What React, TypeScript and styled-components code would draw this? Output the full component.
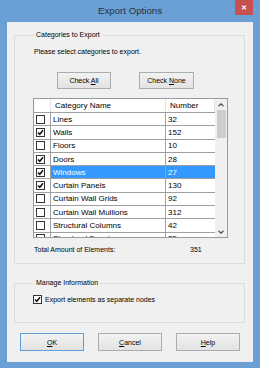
import React from "react";
import styled, { createGlobalStyle } from "styled-components";

const GlobalStyle = createGlobalStyle`
  html, body {
    margin: 0;
    padding: 0;
    background: #6ba0d6;
  }
  body {
    font-family: "Liberation Sans", Arial, sans-serif;
  }
`;

interface ICategory {
  id: number;
  name: string;
  count: number;
  checked: boolean;
}

const categories: ICategory[] = [
  { id: 1, name: "Lines", count: 32, checked: false },
  { id: 2, name: "Walls", count: 152, checked: true },
  { id: 3, name: "Floors", count: 10, checked: false },
  { id: 4, name: "Doors", count: 28, checked: true },
  { id: 5, name: "Windows", count: 27, checked: true },
  { id: 6, name: "Curtain Panels", count: 130, checked: true },
  { id: 7, name: "Curtain Wall Grids", count: 92, checked: false },
  { id: 8, name: "Curtain Wall Mullions", count: 312, checked: false },
  { id: 9, name: "Structural Columns", count: 42, checked: false },
  { id: 10, name: "Structural Framing", count: 25, checked: false },
];

const selectedId = 5;

const CheckBox: React.FC<{ checked: boolean }> = ({ checked }) => (
  <Box>
    {checked && (
      <svg width="7" height="7" viewBox="0 0 7 7">
        <path d="M1 3.4 L2.8 5.3 L6 1.2" fill="none" stroke="#111" strokeWidth="1.5" />
      </svg>
    )}
  </Box>
);

const Chevron: React.FC<{ down?: boolean }> = ({ down }) => (
  <svg width="6" height="4" viewBox="0 0 6 4">
    <path
      d={down ? "M0.5 0.8 L3 3.2 L5.5 0.8" : "M0.5 3.2 L3 0.8 L5.5 3.2"}
      fill="none"
      stroke="#505050"
      strokeWidth="1.2"
    />
  </svg>
);

const App: React.FC = () => {
  return (
    <>
      <GlobalStyle />
      <Window>
        <TitleBar>
          <Title>Export Options</Title>
          <CloseButton>✕</CloseButton>
        </TitleBar>
        <Client>
          <GroupBox>
            <Legend>Categories to Export</Legend>
            <Prompt>Please select categories to export.</Prompt>
            <CheckButtons>
              <Button $width={54}>
                <span>
                  Check <u>A</u>ll
                </span>
              </Button>
              <Button $width={55}>
                <span>
                  Check <u>N</u>one
                </span>
              </Button>
            </CheckButtons>
            <Grid>
              <Table>
                <HeaderRow>
                  <HeadCell $width={17} />
                  <HeadCell $width={115}>Category Name</HeadCell>
                  <HeadCell>Number</HeadCell>
                </HeaderRow>
                {categories.map((c) => {
                  const sel = c.id === selectedId;
                  return (
                    <Row key={c.id}>
                      <CheckCell>
                        <CheckBox checked={c.checked} />
                      </CheckCell>
                      <NameCell $selected={sel}>{c.name}</NameCell>
                      <NumberCell $selected={sel}>{c.count}</NumberCell>
                    </Row>
                  );
                })}
              </Table>
              <ScrollBar>
                <ArrowButton>
                  <Chevron />
                </ArrowButton>
                <Track>
                  <Thumb />
                </Track>
                <ArrowButton>
                  <Chevron down />
                </ArrowButton>
              </ScrollBar>
            </Grid>
            <TotalRow>
              <TotalLabel>Total Amount of Elements:</TotalLabel>
              <span>351</span>
            </TotalRow>
          </GroupBox>
          <GroupBox $second>
            <Legend>Manage Information</Legend>
            <OptionRow>
              <CheckBox checked />
              <span>Export elements as separate nodes</span>
            </OptionRow>
          </GroupBox>
          <DialogButtons>
            <Button $width={64} $height={18} $default>
              <span>
                <u>O</u>K
              </span>
            </Button>
            <Button $width={64} $height={18}>
              <span>
                <u>C</u>ancel
              </span>
            </Button>
            <Button $width={64} $height={18}>
              <span>
                <u>H</u>elp
              </span>
            </Button>
          </DialogButtons>
        </Client>
      </Window>
    </>
  );
};

const Window = styled.div`
  width: 260px;
  height: 368px;
  box-sizing: border-box;
  padding: 0 7px 6px;
  background: #6ba0d6;
  display: flex;
  flex-direction: column;
`;

const TitleBar = styled.div`
  height: 22px;
  display: grid;
  grid-template-columns: 1fr auto 1fr;
  align-items: start;
`;

const Title = styled.div`
  grid-column: 2;
  line-height: 22px;
  font-size: 9.7px;
  color: #22303f;
`;

const CloseButton = styled.div`
  grid-column: 3;
  justify-self: end;
  width: 18px;
  height: 15px;
  background: #c75050;
  color: #fff;
  font-size: 7px;
  font-weight: bold;
  display: flex;
  align-items: center;
  justify-content: center;
`;

const Client = styled.div`
  flex: 1;
  background: #f0f0f0;
  padding: 9px 8px 11px 7px;
  display: flex;
  flex-direction: column;
  font-size: 7px;
  color: #000;
`;

const GroupBox = styled.fieldset<{ $second?: boolean }>`
  margin: ${(p) => (p.$second ? "15px 0 0" : "0")};
  padding: ${(p) => (p.$second ? "0 0 18px 18px" : "0 0 9px 18px")};
  border: 1px solid #dcdcdc;
  min-inline-size: 0;
  display: flex;
  flex-direction: column;
`;

const Legend = styled.legend`
  margin-left: 1px;
  padding: 0 2px;
  font-size: 7px;
  line-height: 8px;
`;

const Prompt = styled.div`
  margin-top: 8px;
  padding-left: 1px;
  line-height: 9px;
`;

const CheckButtons = styled.div`
  margin: 16px 0 0 24px;
  display: flex;
  gap: 28px;
`;

const Button = styled.div<{ $width: number; $height?: number; $default?: boolean }>`
  width: ${(p) => p.$width}px;
  height: ${(p) => p.$height ?? 17}px;
  box-sizing: border-box;
  border: 1px solid ${(p) => (p.$default ? "#5e9fdc" : "#adadad")};
  background: linear-gradient(#f2f2f2, #e3e3e3);
  display: flex;
  align-items: center;
  justify-content: center;
  font-size: 7px;
  color: #000;
  white-space: pre;
`;

const Grid = styled.div`
  margin-top: 9px;
  width: 195px;
  height: 140px;
  box-sizing: border-box;
  border: 1px solid #9a9a9a;
  background: #fff;
  display: flex;
`;

const Table = styled.div`
  flex: 1;
  overflow: hidden;
  display: flex;
  flex-direction: column;
  font-size: 8px;
`;

const HeaderRow = styled.div`
  height: 14px;
  flex: none;
  box-sizing: border-box;
  border-bottom: 1px solid #a0a0a0;
  display: flex;
`;

const HeadCell = styled.div<{ $width?: number }>`
  ${(p) => (p.$width ? `width: ${p.$width}px;` : "flex: 1;")}
  flex-shrink: 0;
  box-sizing: border-box;
  border-right: 1px solid #e3e3e3;
  padding-left: 4px;
  display: flex;
  align-items: center;
`;

const Row = styled.div`
  height: 13.3px;
  flex: none;
  box-sizing: border-box;
  border-bottom: 1px solid #a0a0a0;
  display: flex;
`;

const CheckCell = styled.div`
  width: 17px;
  box-sizing: border-box;
  border-right: 1px solid #a0a0a0;
  display: flex;
  align-items: center;
  padding-left: 2px;
`;

const NameCell = styled.div<{ $selected: boolean }>`
  width: 115px;
  box-sizing: border-box;
  border-right: 1px solid #a0a0a0;
  padding-left: 2px;
  display: flex;
  align-items: center;
  white-space: nowrap;
  background: ${(p) => (p.$selected ? "#3399ff" : "#fff")};
  color: ${(p) => (p.$selected ? "#fff" : "#000")};
`;

const NumberCell = styled(NameCell)`
  width: auto;
  flex: 1;
  border-right: none;
`;

const Box = styled.span`
  width: 9px;
  height: 9px;
  flex: none;
  box-sizing: border-box;
  border: 1px solid #333;
  background: #fff;
  display: flex;
  align-items: center;
  justify-content: center;
`;

const ScrollBar = styled.div`
  width: 12px;
  flex: none;
  background: #f0f0f0;
  display: flex;
  flex-direction: column;
`;

const ArrowButton = styled.div`
  height: 11px;
  flex: none;
  display: flex;
  align-items: center;
  justify-content: center;
`;

const Track = styled.div`
  flex: 1;
  padding: 0 1px 0 2px;
`;

const Thumb = styled.div`
  height: 28px;
  background: #cdcdcd;
`;

const TotalRow = styled.div`
  margin-top: 7px;
  padding-left: 1px;
  line-height: 9px;
  display: flex;
`;

const TotalLabel = styled.span`
  width: 156px;
`;

const OptionRow = styled.div`
  margin-top: 8px;
  height: 9px;
  display: flex;
  align-items: center;
  gap: 3px;
`;

const DialogButtons = styled.div`
  margin: 10px 0 0 6px;
  display: flex;
  gap: 14px;
`;

export default App;
